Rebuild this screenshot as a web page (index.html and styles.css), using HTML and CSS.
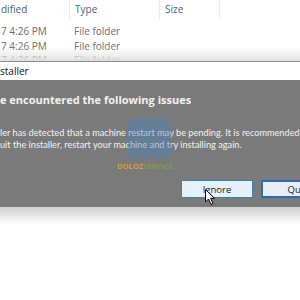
FILE: index.html
```html
<!DOCTYPE html>
<html lang="en">
<head>
  <meta charset="UTF-8" />
  <title>Installer</title>
  <link rel="stylesheet" href="styles.css">
</head>
<body>
  <div class="explorer">
    <div class="header">
      <div class="col date">dified</div>
      <div class="col type">Type</div>
      <div class="col size">Size</div>
    </div>
    <div class="row"><div class="col date">7 4:26 PM</div><div class="col type">File folder</div></div>
    <div class="row"><div class="col date">7 4:26 PM</div><div class="col type">File folder</div></div>
    <div class="row"><div class="col date">7 4:26 PM</div><div class="col type">File folder</div></div>
    <div class="fade"></div>
  </div>

  <div class="dialog">
    <div class="titlebar">staller</div>
    <div class="content">
      <h1 class="heading">e encountered the following issues</h1>
      <p class="message">ler has detected that a machine restart may be pending. It is recommended<br>uit the installer, restart your machine and try installing again.</p>
      <div class="actions">
        <button class="btn">Ignore</button>
        <button class="btn default">Quit</button>
      </div>
      <div class="watermark">
        <div class="mark"></div>
        <div class="mark-text"><span class="orange">DOLOZ</span><span class="green">SERVICE</span></div>
      </div>
      <svg class="cursor" width="11" height="17" viewBox="0 0 11 17">
        <path d="M0.5 0.5 L0.5 13 L3.5 10 L6 15.5 L8 14.5 L5.6 9.3 L9.5 9.3 Z" fill="#fff" stroke="#000" stroke-width="1"/>
      </svg>
    </div>
  </div>
  <div class="shadow"></div>
</body>
</html>
```

FILE: styles.css
```css
body {
  margin: 0;
  background: #fff;
  font-family: "Open Sans", "Noto Sans", sans-serif;
  overflow: hidden;
}
.explorer {
  height: 61px;
  overflow: hidden;
  position: relative;
}
.header {
  display: flex;
  height: 19px;
  color: #4c607a;
  font-size: 10px;
  line-height: 19px;
}
.header .col {
  border-right: 1px solid #ececec;
}
.col {
  white-space: nowrap;
}
.col.date {
  width: 68px;
  padding-left: 1px;
}
.col.type {
  width: 84px;
  padding-left: 5px;
}
.col.size {
  width: 54px;
  padding-left: 5px;
}
.row {
  display: flex;
  height: 14.5px;
  color: #6d6d6d;
  font-size: 10px;
  line-height: 14.5px;
}
.header + .row {
  margin-top: 5px;
}
.fade {
  position: absolute;
  left: 0;
  right: 0;
  bottom: 0;
  height: 14px;
  background: linear-gradient(to bottom, rgba(255,255,255,0), #e2e2e2);
}
.dialog {
  border-top: 1px solid #8a8a8a;
  overflow: hidden;
}
.titlebar {
  height: 18px;
  background: #fff;
  color: #111;
  font-size: 10px;
  line-height: 18px;
}
.content {
  position: relative;
  height: 127px;
  background: #7a7a7a;
  color: #f2f2f2;
  padding: 12px 0 0 0;
  box-sizing: border-box;
  overflow: hidden;
}
.heading {
  margin: 0;
  font-size: 11px;
  font-weight: bold;
  line-height: 16px;
  white-space: nowrap;
}
.message {
  margin: 19px 0 0 0;
  font-family: Lato, "Open Sans", sans-serif;
  font-size: 9.2px;
  line-height: 12px;
  white-space: nowrap;
}
.actions {
  display: flex;
  gap: 8px;
  margin: 29px 0 0 181px;
}
.btn {
  width: 72px;
  height: 18px;
  padding: 0;
  background: #e5f1fb;
  border: 1px solid #3c7fb1;
  color: #222;
  font-family: "Open Sans", "Noto Sans", sans-serif;
  font-size: 9.5px;
  flex-shrink: 0;
}
.btn.default {
  border: 2px solid #2a6bb8;
  background: #e8eef4;
}
.watermark {
  position: absolute;
  left: 117px;
  top: 38px;
  width: 70px;
}
.mark {
  width: 44px;
  height: 40px;
  margin-left: 11px;
  background: rgba(70, 130, 190, 0.4);
  border-radius: 8px 8px 3px 3px;
}
.mark-text {
  font-size: 7.5px;
  font-weight: bold;
  margin-top: 3px;
  white-space: nowrap;
}
.orange {
  color: #d99a3a;
}
.green {
  color: #7a9a4a;
}
.cursor {
  position: absolute;
  left: 205px;
  top: 109px;
}
.shadow {
  height: 18px;
  background: linear-gradient(to bottom, #cfcfcf, #fff);
}
```
